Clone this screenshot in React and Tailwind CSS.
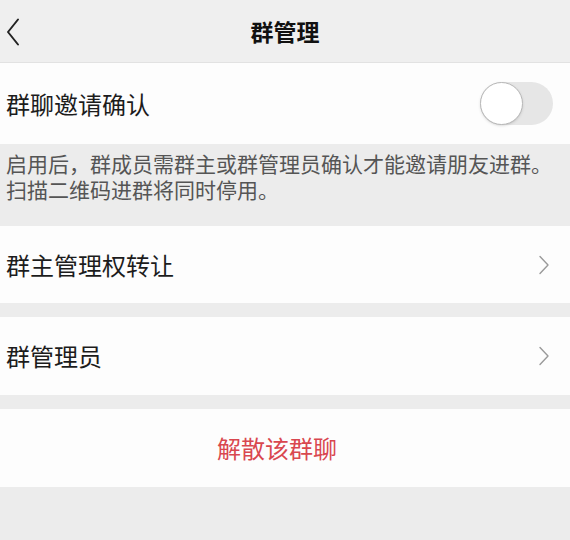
import React, { useState } from 'react'

const font = "font-['Noto_Sans_CJK_SC','Noto_Sans',sans-serif]"

const Chevron = () => (
  <svg width="12" height="20" viewBox="0 0 12 20" fill="none" className="text-[#9a9a9a]">
    <path d="M2 1.5 L10 10 L2 18.5" stroke="currentColor" strokeWidth="1.4" strokeLinecap="round" strokeLinejoin="round" />
  </svg>
)

const Row = ({ label, h = 'h-[78px]' }) => (
  <div className={`${h} bg-[#fdfdfd] flex items-center justify-between pl-[6px] pr-[20px]`}>
    <span className="text-[24px] text-[#1c1c1c]">{label}</span>
    <Chevron />
  </div>
)

export default function App() {
  const [on, setOn] = useState(false)

  return (
    <div className={`${font} w-[570px] h-[540px] bg-[#ececec] overflow-hidden`}>
      {/* header */}
      <div className="h-[63px] bg-[#efefef] flex items-center relative border-b border-[#e2e2e2]">
        <button className="absolute left-[6px] top-[18px]">
          <svg width="14" height="28" viewBox="0 0 14 28" fill="none" className="text-[#222]">
            <path d="M12 1.5 L2 14 L12 26.5" stroke="currentColor" strokeWidth="2" strokeLinecap="round" strokeLinejoin="round" />
          </svg>
        </button>
        <h1 className="w-full text-center text-[23px] font-semibold text-[#111] pt-[1px]">群管理</h1>
      </div>

      {/* invite confirm */}
      <div className="h-[81px] bg-[#fdfdfd] flex items-center justify-between pl-[6px] pr-[17px]">
        <span className="text-[24px] text-[#1c1c1c]">群聊邀请确认</span>
        <button
          onClick={() => setOn(!on)}
          className={`w-[73px] h-[43px] rounded-full flex items-center ${on ? 'bg-[#4cd964] justify-end' : 'bg-[#e6e6e6] justify-start'}`}
        >
          <span className="w-[43px] h-[43px] rounded-full bg-white border border-[#b8b8b8] shadow-sm" />
        </button>
      </div>

      {/* note */}
      <div className="h-[82px] pl-[6px] pt-[6px] text-[21px] leading-[26px] text-[#555]">
        <p>启用后，群成员需群主或群管理员确认才能邀请朋友进群。</p>
        <p>扫描二维码进群将同时停用。</p>
      </div>

      <Row label="群主管理权转让" h="h-[77px]" />
      <div className="h-[14px]" />
      <Row label="群管理员" />
      <div className="h-[14px]" />

      <div className="h-[78px] bg-[#fdfdfd] flex items-center justify-center pr-[16px]">
        <span className="text-[24px] text-[#d9474f]">解散该群聊</span>
      </div>
    </div>
  )
}
